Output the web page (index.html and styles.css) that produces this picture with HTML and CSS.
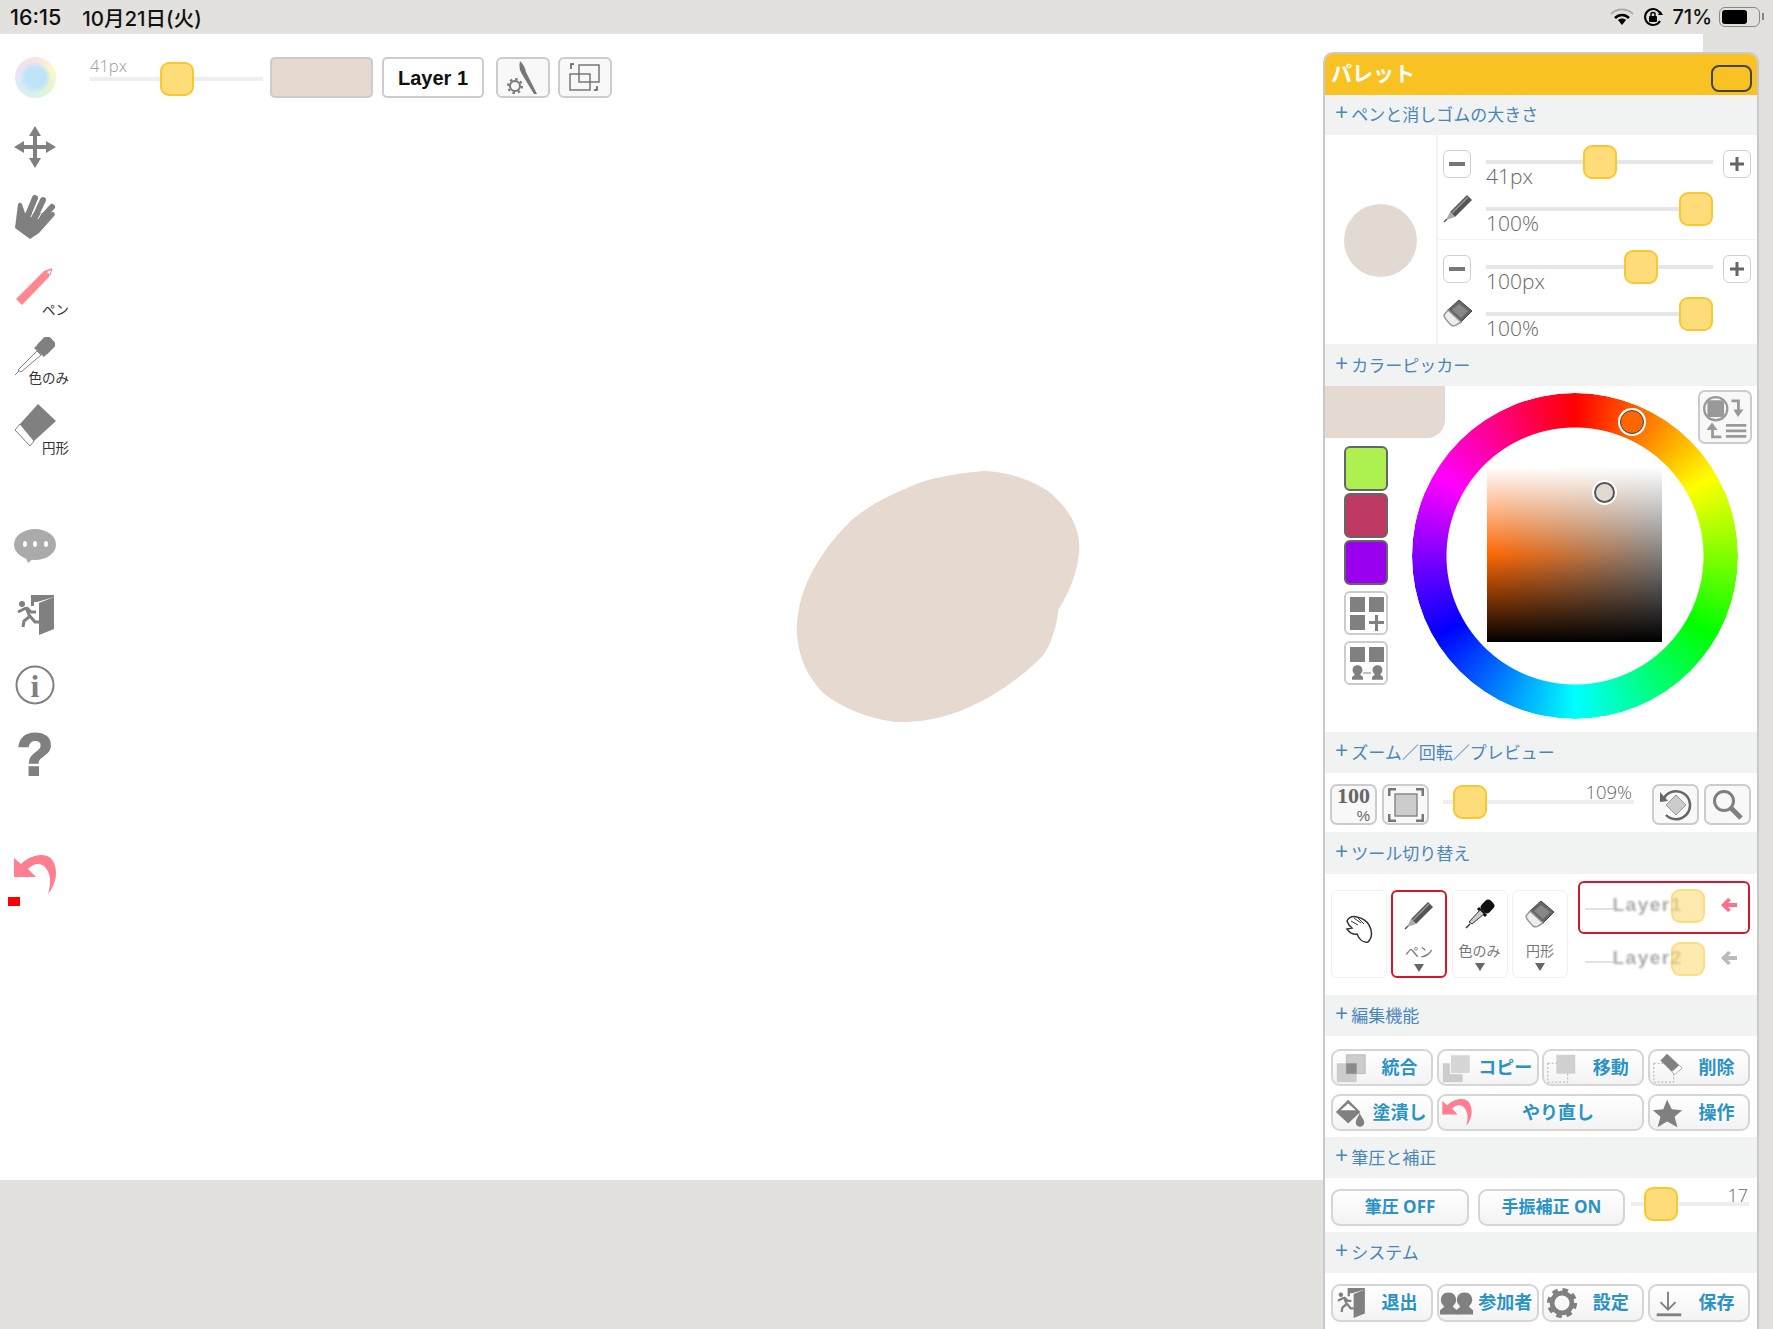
FILE: index.html
```html
<!DOCTYPE html>
<html lang="ja">
<head>
    <meta charset="UTF-8">
    <title>パレット</title>
    <link rel="stylesheet" href="styles.css">
</head>
<body>

<!-- shared icons -->
<svg class="sprite">
    <symbol id="ic-undo" viewBox="0 0 42 40"><path fill="#ff7f90" d="M0 3 7 9C14 2 22 0 28 0 38 0 42 9 42 18 42 27 38 34 34 39 36 32 37 26 35 19 33 13 29 9 24 9 20 9 17 11 14 14L22 22H0Z"/></symbol>
    <symbol id="ic-door" viewBox="0 0 37 40"><g fill="#808080"><path d="M14 0H37V2L20 7H17V11H14Z"/><path d="M22 8 37 2V34L22 40Z"/><circle cx="5" cy="9" r="3"/></g><g fill="none" stroke="#808080" stroke-width="3"><path d="M9 12 12 20 18 27H22"/><path d="M9 13 1 17"/><path d="M10 13 14 17H19"/><path d="M12 22 7 26 6 32"/></g></symbol>
    <symbol id="ic-pen" viewBox="0 0 30 30"><path fill="#555" d="M7 19 24 2 29 7 12 24Z"/><path stroke="#999" stroke-width="1.5" d="M9 20 25 4"/><path fill="#aaa" d="M7 19 12 24 3 27Z"/><path stroke="#555" stroke-width="1.5" d="M4 26 1 29"/></symbol>
    <symbol id="ic-eraser" viewBox="0 0 30 30"><path fill="#666" stroke="#444" d="M16 2 29 13 18 24 5 12Z"/><path fill="#888" d="M16 6 25 13 18 20 9 12Z"/><path fill="#eee" stroke="#999" stroke-width="1.5" d="M5 12 1 17C1 20 4 23 8 27 10 28 12 28 13 27L18 24Z"/></symbol>
    <symbol id="ic-person" viewBox="0 0 20 26"><path fill="#808080" d="M10 0C16 0 19 4 19 9 19 13 16 15 15 17L20 21V26H0V21L5 17C4 15 1 13 1 9 1 4 4 0 10 0Z"/></symbol>
</svg>

<div class="canvas">
    <!-- left tool column -->
    <div class="toolbar">
        <div class="tool"><span class="color-dot"></span></div>
        <div class="tool">
            <svg width="42" height="42" viewBox="0 0 42 42"><path fill="#808080" d="M21 0 27 10H23V19H32V15L42 21 32 27V23H23V32H27L21 42 15 32H19V23H10V27L0 21 10 15V19H19V10H15Z"/></svg>
        </div>
        <div class="tool">
            <svg width="41" height="44" viewBox="0 0 41 44">
                <path fill="#808080" d="M0 33 3 9Q5 6 7 9L10 18 30 18 39 17 40 20 24 38 15 44Z"/>
                <path fill="none" stroke="#808080" stroke-width="6" stroke-linecap="round" d="M13 20 20 3M20 22 28 5M26 24 37 12"/>
                <path fill="none" stroke="#fff" d="M16 22 23 6M23 24 32 8"/>
            </svg>
        </div>
        <div class="tool">
            <svg width="38" height="37" viewBox="0 0 38 37"><path fill="#ff8790" d="M0 31 28 3 36 0 33 9 6 37Z"/><path fill="#fff" stroke="#ff8790" d="M30 4 36 1 34 7Z"/></svg>
            <span class="tool-label">ペン</span>
        </div>
        <div class="tool">
            <svg width="40" height="38" viewBox="0 0 40 38">
                <rect x="24" y="0" width="14" height="17" rx="4" fill="#808080" transform="rotate(45 31 8.5)"/>
                <path stroke="#808080" stroke-width="3" d="M20 10 30 19"/>
                <path fill="#fff" stroke="#808080" d="M22 14 26 18 6 35 3 33Z"/>
                <path stroke="#808080" d="M4 34 0 38"/>
            </svg>
            <span class="tool-label raised">色のみ</span>
        </div>
        <div class="tool">
            <svg width="42" height="43" viewBox="0 0 42 43"><path fill="#808080" d="M24 0 42 17 20 37 6 20Z"/><path fill="#fff" stroke="#808080" d="M6 20 1 26 16 42 20 37Z"/></svg>
            <span class="tool-label raised">円形</span>
        </div>

        <div class="tool tool-group-start">
            <svg width="42" height="34" viewBox="0 0 42 34">
                <ellipse cx="21" cy="15.5" rx="21" ry="15.5" fill="#aaa"/>
                <path fill="#aaa" d="M11 27 14 34 20 29Z"/>
                <ellipse cx="11" cy="15" rx="2" ry="3" fill="#fff"/><ellipse cx="21" cy="15" rx="2" ry="3" fill="#fff"/><ellipse cx="32" cy="15" rx="2" ry="3" fill="#fff"/>
            </svg>
        </div>
        <div class="tool"><svg width="37" height="40"><use href="#ic-door"/></svg></div>
        <div class="tool">
            <svg width="40" height="40" viewBox="0 0 40 40">
                <circle cx="20" cy="20" r="18.5" fill="none" stroke="#808080" stroke-width="2"/>
                <text x="20" y="32" text-anchor="middle" class="info-i">i</text>
            </svg>
        </div>
        <div class="tool"><span class="help-mark">?</span></div>

        <div class="tool tool-group-start">
            <svg width="42" height="40"><use href="#ic-undo"/></svg>
            <span class="undo-count"></span>
        </div>
    </div>

    <!-- top strip -->
    <div class="topbar">
        <div class="slider top-slider">
            <span class="top-size">41px</span>
            <div class="track"></div>
            <div class="thumb thumb-top"></div>
        </div>
        <div class="cur-color"></div>
        <div class="layer-btn">Layer 1</div>
        <div class="icon-btn">
            <svg width="54" height="41" viewBox="0 0 54 41">
                <circle cx="19" cy="29" r="5" fill="none" stroke="#777" stroke-width="2"/>
                <circle cx="19" cy="29" r="7" fill="none" stroke="#777" stroke-width="2" stroke-dasharray="2.5 3"/>
                <path fill="#777" d="M24 4Q29 9 30 15L41 37 38 37 27 19Q22 12 24 4Z"/>
            </svg>
        </div>
        <div class="icon-btn">
            <svg width="54" height="41" viewBox="0 0 54 41">
                <g fill="none" stroke="#777" stroke-width="1.5"><rect x="21" y="8" width="20" height="17"/><rect x="12" y="17" width="20" height="16"/></g>
                <path fill="none" stroke="#555" stroke-width="1.5" d="M13 12V7H16M39 29V33H36"/>
            </svg>
        </div>
    </div>

    <!-- what has been painted so far -->
    <svg class="paint-blob" width="320" height="280" viewBox="0 0 960 840">
        <path fill="#e5d9d0" d="M610 33C680 35 740 55 800 90 860 135 900 200 898 265 895 340 860 410 835 450 830 500 815 550 790 585 730 650 640 710 560 745 480 780 400 790 340 785 260 775 190 745 130 700 85 650 55 600 50 510 52 440 70 380 105 320 140 260 170 225 215 180 270 135 320 110 380 85 450 50 540 40 610 33Z"/>
    </svg>
</div>

<!-- status bar goes last in markup order, first on screen -->
<div class="statusbar">
    <span class="clock">16:15</span>
    <span class="date">10月21日(火)</span>
    <span class="status-right">
        <svg width="24" height="18" viewBox="0 0 24 18">
            <path fill="none" stroke="#aaa" stroke-width="2" d="M1 6C7 0 17 0 23 6"/>
            <path fill="none" stroke="#000" stroke-width="2.5" d="M5 10C9 6 15 6 19 10"/>
            <path fill="#000" d="M8 12C10 10 14 10 16 12L12 17Z"/>
        </svg>
        <svg class="lock-ic" width="20" height="20" viewBox="0 0 20 20">
            <path fill="none" stroke="#000" stroke-width="2" d="M17 14A8 8 0 1 1 17 6"/>
            <path fill="#000" d="M15 8H20L17.5 4Z"/>
            <rect x="6" y="9" width="8" height="6" rx="1" fill="#000"/>
            <path fill="none" stroke="#000" stroke-width="1.5" d="M8 9V7C8 5 12 5 12 7V9"/>
        </svg>
        <span class="battery-pct">71%</span>
        <span class="battery"><span class="battery-fill"></span></span>
    </span>
</div>

<!-- palette window -->
<div class="palette">
    <div class="palette-title">
        <span class="title-text">パレット</span>
        <span class="title-btn"></span>
    </div>

    <div class="section-head short">+ペンと消しゴムの大きさ</div>
    <div class="size-section">
        <div class="brush-preview"><span class="brush-dot"></span></div>
        <div class="size-groups">
            <div class="size-group">
                <span class="round-btn"><svg width="16" height="4"><rect width="16" height="4" fill="#777"/></svg></span>
                <div class="slider size-slider">
                    <div class="track"></div>
                    <span class="val">41px</span>
                    <div class="thumb" style="left:97px"></div>
                </div>
                <span class="round-btn"><svg width="14" height="14"><path fill="#666" d="M5.500 0H8.500V5.500H14V8.500H8.500V14H5.500V8.500H0V5.500H5.500Z"/></svg></span>
                <svg class="row-icon" width="30" height="30"><use href="#ic-pen"/></svg>
                <div class="slider size-slider second">
                    <div class="track"></div>
                    <span class="val">100%</span>
                    <div class="thumb" style="left:193px"></div>
                </div>
            </div>
            <div class="size-group">
                <span class="round-btn"><svg width="16" height="4"><rect width="16" height="4" fill="#777"/></svg></span>
                <div class="slider size-slider">
                    <div class="track"></div>
                    <span class="val">100px</span>
                    <div class="thumb" style="left:138px"></div>
                </div>
                <span class="round-btn"><svg width="14" height="14"><path fill="#666" d="M5.500 0H8.500V5.500H14V8.500H8.500V14H5.500V8.500H0V5.500H5.500Z"/></svg></span>
                <svg class="row-icon" width="30" height="30"><use href="#ic-eraser"/></svg>
                <div class="slider size-slider second">
                    <div class="track"></div>
                    <span class="val">100%</span>
                    <div class="thumb" style="left:193px"></div>
                </div>
            </div>
        </div>
    </div>

    <div class="section-head tall">+カラーピッカー</div>
    <div class="picker-section">
        <div class="picker-left">
            <div class="big-swatch"></div>
            <div class="swatches">
                <span class="swatch swatch-green"></span>
                <span class="swatch swatch-rose"></span>
                <span class="swatch swatch-violet"></span>
                <span class="swatch-btn first">
                    <svg width="40" height="40" viewBox="0 0 40 40">
                        <g fill="#808080"><rect x="4" y="4" width="15" height="15"/><rect x="23" y="4" width="15" height="15"/><rect x="4" y="22" width="15" height="15"/><path d="M29 22H32V28H38V31H32V38H29V31H23V28H29Z"/></g>
                    </svg>
                </span>
                <span class="swatch-btn">
                    <svg width="40" height="40" viewBox="0 0 40 40">
                        <g fill="#808080"><rect x="4" y="4" width="15" height="15"/><rect x="23" y="4" width="15" height="15"/></g>
                        <use href="#ic-person" x="6" y="22" width="11" height="15"/>
                        <use href="#ic-person" x="26" y="22" width="11" height="15"/>
                        <path fill="none" stroke="#808080" d="M17 30H25"/>
                    </svg>
                </span>
            </div>
        </div>
        <div class="wheel">
            <div class="wheel-ring"></div>
            <div class="sv-box"></div>
            <span class="hue-mark"></span>
            <span class="sv-mark"></span>
        </div>
        <span class="picker-mode">
            <svg width="50" height="50" viewBox="0 0 54 54">
                <circle cx="17" cy="18" r="12.5" fill="none" stroke="#999" stroke-width="2.5"/>
                <rect x="8" y="9" width="18" height="18" rx="3" fill="#999"/>
                <path fill="#999" d="M34 8H43V19H47L41 27 36 19H40V11H34Z"/>
                <path fill="#999" d="M13 33 19 41H15V47H23V50H12V41H7Z"/>
                <path stroke="#999" stroke-width="3" d="M28 36H50M28 42H50M28 48H50"/>
            </svg>
        </span>
    </div>

    <div class="section-head">+ズーム／回転／プレビュー</div>
    <div class="zoom-section">
        <span class="view-btn btn-100"><b>100</b><i>%</i></span>
        <span class="view-btn">
            <svg width="36" height="34" viewBox="0 0 36 34">
                <rect x="7" y="6" width="22" height="22" fill="#ccc" stroke="#888" stroke-width="1.5"/>
                <path fill="none" stroke="#777" stroke-width="3" d="M1 8V1H8M28 1H35V8M35 26V33H28M8 33H1V26"/>
            </svg>
        </span>
        <div class="slider zoom-slider">
            <div class="track"></div>
            <span class="zoom-val">109%</span>
            <div class="thumb" style="left:10px"></div>
        </div>
        <span class="view-btn">
            <svg width="34" height="32" viewBox="0 0 34 32">
                <path fill="none" stroke="#666" stroke-width="2.5" d="M5 9A14 14 0 1 1 7 26"/>
                <path fill="#666" d="M1 3 9 12 1 13Z"/>
                <path fill="#ccc" stroke="#999" d="M17 6 27 16 17 26 7 16Z"/>
            </svg>
        </span>
        <span class="view-btn">
            <svg width="32" height="32" viewBox="0 0 32 32">
                <circle cx="12" cy="12" r="9.5" fill="none" stroke="#808080" stroke-width="3"/>
                <path stroke="#808080" stroke-width="5" d="M19 19 29 29"/>
            </svg>
        </span>
    </div>

    <div class="section-head tall">+ツール切り替え</div>
    <div class="switch-section">
        <div class="card">
            <svg class="card-hand" width="28" height="28" viewBox="0 0 28 28">
                <path fill="#fff" stroke="#333" stroke-width="1.5" d="M2 6C4 2 8 1 12 2 17 3 21 5 24 10 27 15 28 22 23 27 18 28 14 24 12 19 8 20 4 17 2 14L7 13 4 10 2 6Z"/>
                <path fill="none" stroke="#333" d="M6 6 13 10M9 3 16 8M13 3 19 9"/>
            </svg>
        </div>
        <div class="card active">
            <svg class="card-icon" width="30" height="30"><use href="#ic-pen"/></svg>
            <span class="card-label">ペン</span><span class="tri"></span>
        </div>
        <div class="card">
            <svg class="card-icon" width="30" height="30" viewBox="0 0 30 30">
                <rect x="17" y="1" width="11" height="13" rx="4" fill="#111" transform="rotate(45 22.5 7.5)"/>
                <path stroke="#111" stroke-width="3" d="M13 9 21 17"/>
                <path fill="#ccc" stroke="#333" d="M15 11 19 15 7 25 4 23Z"/>
                <path stroke="#333" stroke-width="1.5" d="M5 25 1 29"/>
            </svg>
            <span class="card-label">色のみ</span><span class="tri"></span>
        </div>
        <div class="card">
            <svg class="card-icon" width="30" height="30"><use href="#ic-eraser"/></svg>
            <span class="card-label">円形</span><span class="tri"></span>
        </div>
        <div class="layers">
            <div class="layer-row selected">
                <span class="layer-line"></span>
                <span class="layer-name">Layer1</span>
                <span class="layer-thumb"></span>
                <svg class="layer-arrow" width="16" height="14" viewBox="0 0 16 14"><path fill="#ff6f8c" d="M7 0 10 2 7 5H16V9H7L10 12 7 14 0 7Z"/></svg>
            </div>
            <div class="layer-row">
                <span class="layer-line"></span>
                <span class="layer-name">Layer2</span>
                <span class="layer-thumb"></span>
                <svg class="layer-arrow" width="16" height="14" viewBox="0 0 16 14"><path fill="#bbb" d="M7 0 10 2 7 5H16V9H7L10 12 7 14 0 7Z"/></svg>
            </div>
        </div>
    </div>

    <div class="section-head">+編集機能</div>
    <div class="btn-grid edit-grid">
        <span class="btn">
            <svg class="btn-icon" width="36" height="32" viewBox="0 0 36 32"><rect x="3" y="11" width="21" height="20" fill="#ccc"/><rect x="13" y="2" width="20" height="20" fill="#ccc" stroke="#bbb"/><rect x="13" y="11" width="11" height="11" fill="#8a8a8a"/></svg>
            <span class="btn-text">統合</span>
        </span>
        <span class="btn">
            <svg class="btn-icon" width="36" height="32" viewBox="0 0 36 32"><rect x="3" y="11" width="21" height="20" fill="#ccc"/><rect x="11" y="2" width="21" height="20" fill="#d6d6d6" stroke="#fff"/></svg>
            <span class="btn-text">コピー</span>
        </span>
        <span class="btn">
            <svg class="btn-icon" width="36" height="32" viewBox="0 0 36 32"><rect x="3" y="11" width="21" height="20" fill="none" stroke="#aaa" stroke-dasharray="2 2"/><rect x="12" y="2" width="20" height="20" fill="#d0d0d0"/></svg>
            <span class="btn-text">移動</span>
        </span>
        <span class="btn">
            <svg class="btn-icon" width="36" height="32" viewBox="0 0 36 32"><rect x="3" y="11" width="21" height="20" fill="none" stroke="#aaa" stroke-dasharray="2 2"/><path fill="#808080" d="M17 1 30 13 22 20 10 8Z"/><path fill="#fff" stroke="#aaa" d="M30 13 33 16 25 23 22 20Z"/></svg>
            <span class="btn-text">削除</span>
        </span>
        <span class="btn">
            <svg class="btn-icon" width="36" height="32" viewBox="0 0 36 32"><path fill="#808080" d="M15 2 28 15 15 27 2 15Z"/><path fill="#fff" d="M15 6 23 13H7Z"/><path fill="#808080" d="M27 16C29 20 32 23 32 26A4.500 4.500 0 0 1 23 26C23 23 26 20 27 16Z"/></svg>
            <span class="btn-text">塗潰し</span>
        </span>
        <span class="btn wide">
            <svg class="btn-icon" width="30" height="28"><use href="#ic-undo"/></svg>
            <span class="btn-text">やり直し</span>
        </span>
        <span class="btn">
            <svg class="btn-icon" width="36" height="32" viewBox="0 0 36 32"><path fill="#808080" d="M17 2 22 12 33 13 25 20 28 31 17 25 7 31 10 20 2 13 13 12Z"/></svg>
            <span class="btn-text">操作</span>
        </span>
    </div>

    <div class="section-head">+筆圧と補正</div>
    <div class="pressure-section">
        <span class="btn pressure-btn"><span class="btn-text">筆圧 OFF</span></span>
        <span class="btn stabilizer-btn"><span class="btn-text">手振補正 ON</span></span>
        <div class="slider stabilizer-slider">
            <div class="track"></div>
            <span class="stabilizer-val">17</span>
            <div class="thumb" style="left:13px"></div>
        </div>
    </div>

    <div class="section-head">+システム</div>
    <div class="btn-grid system-grid">
        <span class="btn">
            <svg class="btn-icon" width="28" height="30"><use href="#ic-door"/></svg>
            <span class="btn-text">退出</span>
        </span>
        <span class="btn">
            <svg class="btn-icon" width="36" height="32" viewBox="0 0 36 32"><use href="#ic-person" x="0" y="4" width="18" height="25"/><use href="#ic-person" x="17" y="4" width="18" height="25"/></svg>
            <span class="btn-text">参加者</span>
        </span>
        <span class="btn">
            <svg class="btn-icon" width="36" height="32" viewBox="0 0 36 32"><circle cx="18" cy="16" r="10.500" fill="none" stroke="#808080" stroke-width="5"/><circle cx="18" cy="16" r="14" fill="none" stroke="#808080" stroke-width="4" stroke-dasharray="6 5"/></svg>
            <span class="btn-text">設定</span>
        </span>
        <span class="btn">
            <svg class="btn-icon" width="36" height="32" viewBox="0 0 36 32"><path fill="none" stroke="#808080" stroke-width="2" d="M18 4V22M10 15 18 23 26 15"/><rect x="6" y="27" width="26" height="3" fill="#808080"/></svg>
            <span class="btn-text">保存</span>
        </span>
    </div>
</div>

</body>
</html>
```

FILE: styles.css
```css
body {
    margin: 0;
    width: 1773px;
    height: 1329px;
    overflow: hidden;
    position: relative;
    display: flex;
    flex-direction: column-reverse;
    justify-content: flex-end;
    background-color: #e2e1dd;
    font-family: "Open Sans", "Noto Sans CJK JP", sans-serif;
    color: #666;
}

.sprite {
    display: none;
}

svg {
    display: block;
    flex-shrink: 0;
}

/* Status bar */
.statusbar {
    height: 34px;
    display: flex;
    align-items: center;
    padding: 0 10px;
    font-family: Inter, "Noto Sans CJK JP", sans-serif;
    font-size: 20px;
    font-weight: 500;
    color: #111;
    background-color: #e2e1dd;
}

.clock {
    font-size: 21.500px;
}

.date {
    margin-left: 21px;
    font-size: 20.500px;
}

.status-right {
    margin-left: auto;
    display: flex;
    align-items: center;
}

.lock-ic {
    margin-left: 9px;
}

.battery-pct {
    margin-left: 9px;
}

.battery {
    position: relative;
    width: 41px;
    height: 20px;
    margin-left: 7px;
    margin-right: 3px;
    padding: 2px;
    box-sizing: border-box;
    border: 1.5px solid #888;
    border-radius: 6px;
}

.battery::after {
    content: "";
    position: absolute;
    right: -5px;
    top: 5px;
    width: 2px;
    height: 7px;
    background-color: #888;
}

.battery-fill {
    display: block;
    width: 71%;
    height: 100%;
    background-color: #000;
    border-radius: 3px;
}

/* Canvas */
.canvas {
    position: relative;
    width: 1703px;
    height: 1146px;
    display: flex;
    background-color: #fff;
}

.paint-blob {
    position: absolute;
    left: 780px;
    top: 426px;
}

/* Left tool column */
.toolbar {
    width: 70px;
    padding-top: 9px;
    display: flex;
    flex-direction: column;
}

.tool {
    position: relative;
    height: 69.6px;
    display: flex;
    align-items: center;
    justify-content: center;
    flex-shrink: 0;
}

.tool-group-start {
    margin-top: 50.5px;
}

.tool-label {
    position: absolute;
    right: 1px;
    bottom: 3px;
    font-size: 13.5px;
    line-height: 16px;
    color: #333;
}

.tool-label.raised {
    bottom: 5px;
}

.color-dot {
    width: 41px;
    height: 41px;
    border-radius: 50%;
    background:
        radial-gradient(circle, #bfe4f8 0 36%, rgba(191, 228, 248, 0) 54%),
        conic-gradient(#f9e3e6, #fbf7c8, #e8f6d0, #d8f3e8, #d6ecf8, #eee2f4, #f9e3e6);
}

.info-i {
    font-family: "Liberation Serif", serif;
    font-weight: 700;
    font-size: 32px;
    fill: #808080;
}

.help-mark {
    font-family: "Liberation Sans", sans-serif;
    font-weight: 700;
    font-size: 60px;
    line-height: 58px;
    color: #808080;
    -webkit-text-stroke: 2px #808080;
}

.undo-count {
    position: absolute;
    left: 8px;
    bottom: 4px;
    width: 12px;
    height: 9px;
    background-color: #f00;
}

/* Top strip */
.topbar {
    margin: 23px 0 0 20px;
    display: flex;
    align-items: flex-start;
    height: 41px;
}

.slider {
    position: relative;
}

.track {
    height: 4px;
    background-color: #e6e6e6;
}

.thumb {
    position: absolute;
    top: 0;
    width: 34px;
    height: 34px;
    box-sizing: border-box;
    background-color: #fedc7a;
    border: 2px solid #f8c92e;
    border-radius: 9px;
}

.top-slider {
    width: 173px;
    height: 41px;
}

.top-slider .track {
    margin-top: 20px;
    background-color: #eee;
}

.top-size {
    position: absolute;
    left: 0;
    top: -1px;
    font-size: 16.500px;
    line-height: 20px;
    font-weight: 300;
    color: #999;
}

.thumb-top {
    left: 70px;
    top: 5px;
}

.cur-color {
    width: 103px;
    height: 41px;
    margin-left: 7px;
    box-sizing: border-box;
    background-color: #e5d9d0;
    border: 2px solid #ccc;
    border-radius: 5px;
}

.layer-btn {
    width: 102px;
    height: 41px;
    margin-left: 9px;
    box-sizing: border-box;
    border: 2px solid #ccc;
    border-radius: 5px;
    font-family: "Liberation Sans", sans-serif;
    font-weight: 700;
    font-size: 20px;
    line-height: 39px;
    text-align: center;
    color: #111;
}

.icon-btn {
    width: 54px;
    height: 41px;
    margin-left: 12px;
    box-sizing: border-box;
    border: 2px solid #ccc;
    border-radius: 6px;
    background-color: #f8f8f8;
    display: flex;
    align-items: center;
    justify-content: center;
}

.icon-btn + .icon-btn {
    margin-left: 8px;
}

/* Palette window */
.palette {
    position: absolute;
    left: 1323px;
    top: 52px;
    width: 436px;
    height: 1277px;
    box-sizing: border-box;
    border: 2px solid #c9c9c9;
    border-bottom: none;
    border-radius: 10px 10px 0 0;
    background-color: #fff;
    overflow: hidden;
}

.palette-title {
    height: 41px;
    padding-left: 6px;
    display: flex;
    align-items: center;
    justify-content: space-between;
    background-color: #f8c322;
    color: #fff;
    font-size: 21px;
    font-weight: 700;
}

.title-text {
    margin-top: -6px;
}

.title-btn {
    width: 41px;
    height: 27px;
    margin: 8px 5px 0 0;
    box-sizing: border-box;
    border: 2px solid #444;
    border-radius: 8px;
}

.section-head {
    height: 41px;
    padding-left: 10px;
    background-color: #f1f2f2;
    color: #4a86b8;
    font-size: 17px;
    line-height: 36px;
}

.section-head::first-letter {
    font-size: 23px;
    font-weight: 400;
    margin-right: 3px;
}

.section-head.short {
    height: 40px;
    line-height: 34px;
}

.section-head.tall {
    height: 42px;
    line-height: 38px;
}

/* Pen and eraser size */
.size-section {
    height: 209px;
    display: flex;
}

.brush-preview {
    width: 111px;
    display: flex;
    align-items: center;
    justify-content: center;
    border-right: 2px solid #f1f2f2;
}

.brush-dot {
    width: 73px;
    height: 73px;
    border-radius: 50%;
    background-color: #e3d9d3;
    margin-top: 2px;
}

.size-groups {
    flex: 1;
}

.size-group {
    height: 105px;
    padding: 10px 0 0 5px;
    box-sizing: border-box;
    display: grid;
    grid-template-columns: 43px 237px 29px;
    grid-auto-rows: 47px;
    border-bottom: 1px solid #f1f2f2;
}

.size-group:last-child {
    height: 104px;
    border-bottom: none;
}

.round-btn {
    width: 28px;
    height: 28px;
    margin-top: 5px;
    box-sizing: border-box;
    border: 1.5px solid #d0d0d0;
    border-radius: 6px;
    display: flex;
    align-items: center;
    justify-content: center;
}

.row-icon {
    margin-top: 1px;
}

.size-slider {
    grid-column: 2;
    width: 227px;
    height: 47px;
}

.size-slider .track {
    position: relative;
    top: 15px;
    margin-bottom: 15px;
}

.val {
    display: block;
    font-size: 21px;
    font-weight: 300;
    line-height: 24px;
    color: #666;
    white-space: nowrap;
}

.size-slider.second .val {
    margin-top: 4px;
}

/* Colour picker */
.picker-section {
    position: relative;
    height: 346px;
    display: flex;
}

.picker-left {
    width: 87px;
    flex-shrink: 0;
}

.big-swatch {
    width: 120px;
    height: 52px;
    background-color: #e5dad2;
    border-radius: 0 0 18px 0;
}

.swatches {
    margin: 8px 0 0 19px;
    display: flex;
    flex-direction: column;
    gap: 2px;
}

.swatch {
    width: 44px;
    height: 45px;
    box-sizing: border-box;
    border: 2px solid #666;
    border-radius: 6px;
}

.swatch-green { background-color: #aef050; }
.swatch-rose { background-color: #bf3a62; }
.swatch-violet { background-color: #9b00ee; }

.swatch-btn {
    width: 44px;
    height: 44px;
    margin-top: 4px;
    box-sizing: border-box;
    border: 2px solid #ccc;
    border-radius: 6px;
}

.swatch-btn.first {
    margin-top: 4px;
}

.wheel {
    position: relative;
    width: 326px;
    height: 326px;
    margin-top: 7px;
}

.wheel-ring {
    width: 100%;
    height: 100%;
    border-radius: 50%;
    background: conic-gradient(#f00, #ff0, #0f0, #0ff, #00f, #f0f, #f00);
    -webkit-mask: radial-gradient(circle, transparent 128px, #000 129px);
    mask: radial-gradient(circle, transparent 128px, #000 129px);
}

.sv-box {
    position: absolute;
    left: 75px;
    top: 74px;
    width: 175px;
    height: 175px;
    background:
        linear-gradient(to bottom, #fff, rgba(255, 255, 255, 0) 50%, rgba(0, 0, 0, 0) 50%, #000),
        linear-gradient(to right, #f60, #808080);
}

.hue-mark {
    position: absolute;
    left: 208px;
    top: 17px;
    width: 24px;
    height: 24px;
    box-sizing: border-box;
    border-radius: 50%;
    background-color: #f60;
    border: 1.5px solid #444;
    box-shadow: 0 0 0 2px #fff;
}

.sv-mark {
    position: absolute;
    left: 182px;
    top: 89px;
    width: 21px;
    height: 21px;
    box-sizing: border-box;
    border-radius: 50%;
    background-color: #e3d9d3;
    border: 2px solid #555;
    box-shadow: 0 0 0 2px #fff;
}

.picker-mode {
    position: absolute;
    right: 5px;
    top: 4px;
    width: 54px;
    height: 54px;
    box-sizing: border-box;
    border: 2px solid #ccc;
    border-radius: 7px;
    background-color: #f8f8f8;
}

/* Zoom row */
.zoom-section {
    height: 59px;
    box-sizing: border-box;
    padding: 11px 0 0 5px;
    display: flex;
    align-items: flex-start;
    gap: 5px;
}

.view-btn {
    width: 47px;
    height: 41px;
    box-sizing: border-box;
    border: 2px solid #ccc;
    border-radius: 7px;
    background-color: #f8f8f8;
    display: flex;
    align-items: center;
    justify-content: center;
}

.btn-100 {
    flex-direction: column;
    align-items: stretch;
    justify-content: flex-start;
    text-align: center;
    color: #666;
}

.btn-100 b {
    display: block;
    height: 25px;
    margin-top: -3px;
    font-family: "Liberation Serif", serif;
    font-size: 22px;
    line-height: 25px;
}

.btn-100 i {
    display: block;
    height: 16px;
    font-family: "Liberation Sans", sans-serif;
    font-style: normal;
    font-size: 15px;
    line-height: 16px;
    text-align: right;
    padding-right: 5px;
}

.zoom-slider {
    width: 191px;
    height: 34px;
    margin: 1px 13px 0 9px;
}

.zoom-slider .track {
    position: relative;
    top: 15px;
    background-color: #eee;
}

.zoom-val {
    position: absolute;
    right: 2px;
    top: -4px;
    font-size: 18.500px;
    font-weight: 300;
    line-height: 22px;
}

/* Tool switch */
.switch-section {
    height: 121px;
    box-sizing: border-box;
    padding: 7px 0 0 5.500px;
    display: flex;
    align-items: flex-start;
    gap: 4.500px;
}

.card {
    width: 56px;
    height: 88px;
    margin-top: 9px;
    box-sizing: border-box;
    border: 1.5px solid #f0f0f0;
    border-radius: 6px;
    display: flex;
    flex-direction: column;
    align-items: center;
}

.card.active {
    border: 2px solid #d8152a;
}

.card-hand {
    margin-top: 24px;
}

.card-icon {
    margin-top: 8px;
}

.card-label {
    margin-top: 12px;
    font-size: 14px;
    line-height: 20px;
    color: #777;
}

.tri {
    width: 0;
    height: 0;
    margin-top: 2px;
    border-left: 5px solid transparent;
    border-right: 5px solid transparent;
    border-top: 8px solid #666;
}

.layers {
    width: 172px;
    margin-left: 5px;
}

.layer-row {
    position: relative;
    height: 53px;
    box-sizing: border-box;
    padding-left: 5px;
    border: 2px solid transparent;
    border-radius: 6px;
    display: flex;
    align-items: center;
}

.layer-row.selected {
    border-color: #d8152a;
}

.layer-line {
    width: 28px;
    height: 2px;
    margin-top: 2px;
    background-color: #e2e2e2;
}

.layer-name {
    margin-top: -5px;
    font-family: "Liberation Sans", sans-serif;
    font-weight: 700;
    font-size: 19px;
    letter-spacing: 1.500px;
    color: #aaa;
    filter: blur(1px);
}

.layer-thumb {
    position: absolute;
    left: 91px;
    top: 6px;
    width: 34px;
    height: 34px;
    box-sizing: border-box;
    background-color: #fedc7a;
    border: 2px solid #f8c92e;
    border-radius: 9px;
    opacity: 0.6;
}

.layer-arrow {
    position: absolute;
    left: 141px;
    top: 15px;
}

/* Text buttons */
.btn-grid {
    display: grid;
    grid-template-columns: repeat(4, 1fr);
    column-gap: 3.500px;
    width: 419px;
    margin-left: 6px;
}

.edit-grid {
    height: 101px;
    box-sizing: border-box;
    padding-top: 13px;
    grid-auto-rows: 37px;
    row-gap: 8px;
}

.system-grid {
    padding-top: 11px;
    grid-auto-rows: 38px;
}

.btn {
    box-sizing: border-box;
    border: 2px solid #d5d5d5;
    border-radius: 9px;
    background: linear-gradient(#fff, #f3f3f3);
    display: flex;
    align-items: center;
    color: #2a93c6;
    font-size: 18px;
    font-weight: 700;
    white-space: nowrap;
}

.btn.wide {
    grid-column: span 2;
}

.btn-icon {
    width: 34px;
    margin-left: 1px;
    overflow: visible;
}

.btn-text {
    flex: 1;
    text-align: center;
    margin-top: -4px;
}

/* Pressure and stabilizer */
.pressure-section {
    height: 54px;
    box-sizing: border-box;
    padding: 9px 0 0 6px;
    display: flex;
    align-items: flex-start;
}

.pressure-btn {
    width: 138px;
    height: 37px;
    margin-top: 2px;
    font-size: 17px;
}

.stabilizer-btn {
    width: 147px;
    height: 37px;
    margin: 2px 0 0 9px;
    font-size: 17px;
}

.stabilizer-slider {
    width: 118px;
    height: 34px;
    margin-left: 6px;
}

.stabilizer-slider .track {
    position: relative;
    top: 15px;
    background-color: #eee;
}

.stabilizer-val {
    position: absolute;
    right: 1px;
    top: -3px;
    font-size: 18px;
    font-weight: 300;
    line-height: 22px;
}
```
